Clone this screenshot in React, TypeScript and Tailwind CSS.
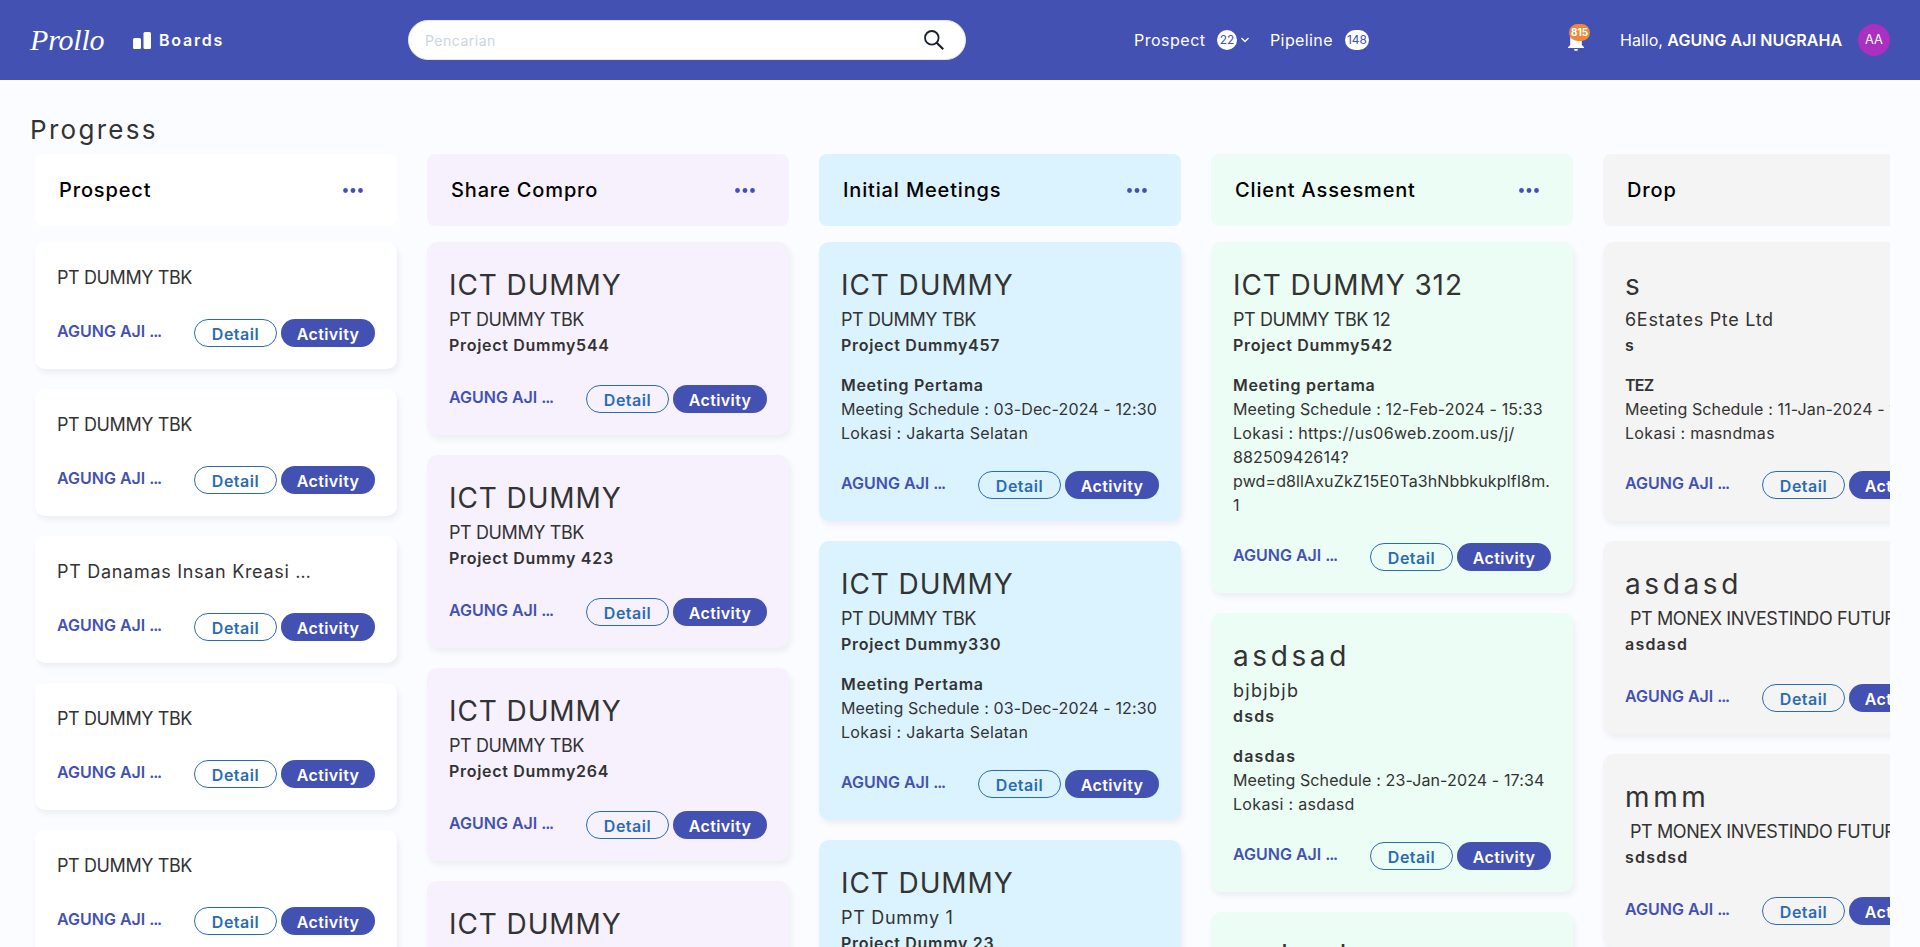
import React from "react";

type Meeting = { title: string; schedule: string; location: string[] };
type Card = { title?: string; company: string; project?: string; meeting?: Meeting; indent?: boolean };
type Column = { name: string; tone: string; cards: Card[] };

const columns: Column[] = [
  {
    name: "Prospect",
    tone: "bg-white",
    cards: [
      { company: "PT DUMMY TBK" },
      { company: "PT DUMMY TBK" },
      { company: "PT Danamas Insan Kreasi …" },
      { company: "PT DUMMY TBK" },
      { company: "PT DUMMY TBK" },
    ],
  },
  {
    name: "Share Compro",
    tone: "bg-[#f7f1fe]",
    cards: [
      { title: "ICT DUMMY", company: "PT DUMMY TBK", project: "Project Dummy544" },
      { title: "ICT DUMMY", company: "PT DUMMY TBK", project: "Project Dummy 423" },
      { title: "ICT DUMMY", company: "PT DUMMY TBK", project: "Project Dummy264" },
      { title: "ICT DUMMY", company: "PT DUMMY TBK" },
    ],
  },
  {
    name: "Initial Meetings",
    tone: "bg-[#dbf3ff]",
    cards: [
      {
        title: "ICT DUMMY",
        company: "PT DUMMY TBK",
        project: "Project Dummy457",
        meeting: { title: "Meeting Pertama", schedule: "03-Dec-2024 - 12:30", location: ["Jakarta Selatan"] },
      },
      {
        title: "ICT DUMMY",
        company: "PT DUMMY TBK",
        project: "Project Dummy330",
        meeting: { title: "Meeting Pertama", schedule: "03-Dec-2024 - 12:30", location: ["Jakarta Selatan"] },
      },
      { title: "ICT DUMMY", company: "PT Dummy 1", project: "Project Dummy 23" },
    ],
  },
  {
    name: "Client Assesment",
    tone: "bg-[#ebfdf5]",
    cards: [
      {
        title: "ICT DUMMY 312",
        company: "PT DUMMY TBK 12",
        project: "Project Dummy542",
        meeting: {
          title: "Meeting pertama",
          schedule: "12-Feb-2024 - 15:33",
          location: ["https://us06web.zoom.us/j/", "88250942614?", "pwd=d8llAxuZkZ15E0Ta3hNbbkukplfI8m.", "1"],
        },
      },
      {
        title: "asdsad",
        company: "bjbjbjb",
        project: "dsds",
        meeting: { title: "dasdas", schedule: "23-Jan-2024 - 17:34", location: ["asdasd"] },
      },
      { title: "asdsad", company: "bjbjbjb" },
    ],
  },
  {
    name: "Drop",
    tone: "bg-[#f4f4f4]",
    cards: [
      {
        title: "s",
        company: "6Estates Pte Ltd",
        project: "s",
        meeting: { title: "TEZ", schedule: "11-Jan-2024 - 10:00", location: ["masndmas"] },
      },
      { title: "asdasd", company: "PT MONEX INVESTINDO FUTURES", project: "asdasd", indent: true },
      { title: "mmm", company: "PT MONEX INVESTINDO FUTURES", project: "sdsdsd", indent: true },
    ],
  },
];

// Capitals are set tighter than lower-case text at every size.
const hasLower = (text: string) => /[a-z]/.test(text);
const allLower = (text: string) => /^[a-z]+$/.test(text);

const titleTracking = (text: string) => (hasLower(text) ? "tracking-[3.6px]" : "tracking-[0.9px]");
const companyTracking = (text: string) =>
  allLower(text) ? "tracking-[1.3px]" : hasLower(text) ? "tracking-[0.7px]" : "tracking-[-0.4px]";
const strongTracking = (text: string) =>
  allLower(text) ? "tracking-[1.2px]" : hasLower(text) ? "tracking-[0.7px]" : "tracking-[-0.8px]";

function BoardCard({ card, tone }: { card: Card; tone: string }) {
  const { title, company, project, meeting, indent } = card;
  return (
    <article className={`shrink-0 rounded-[10px] p-[22px] text-[#333] shadow-[2px_4px_6px_rgba(0,0,0,0.06)] ${tone}`}>
      {title && (
        <h3 className={`h-[42px] text-[28px] leading-[43px] whitespace-nowrap ${titleTracking(title)}`}>{title}</h3>
      )}
      <p className={`h-[27px] text-[18px] leading-[28px] whitespace-nowrap ${companyTracking(company)} ${indent ? "pl-[5px]" : ""}`}>
        {company}
      </p>
      {project && (
        <p className={`h-6 text-[16px] leading-6 font-semibold whitespace-nowrap ${strongTracking(project)}`}>{project}</p>
      )}
      {meeting && (
        <div className="mt-4 -mb-0.5 text-[16px] leading-6 tracking-[0.12px] whitespace-nowrap">
          <p className={`font-semibold ${strongTracking(meeting.title)}`}>{meeting.title}</p>
          <p>Meeting Schedule : {meeting.schedule}</p>
          <p className="tracking-[0.32px]">Lokasi : {meeting.location[0]}</p>
          {meeting.location.slice(1).map((line) => (
            <p key={line}>{line}</p>
          ))}
        </div>
      )}
      <div className="mt-7 flex h-7 items-center justify-between">
        <span className="-mt-1 text-[16px] font-semibold text-[#4351b2] whitespace-nowrap">
          AGUNG AJI <span className="tracking-[-1.2px]">...</span>
        </span>
        <div className="flex gap-1">
          <button className="h-7 w-[83px] rounded-full border border-[#2b6cb0] pt-px text-[16px] leading-none font-semibold tracking-[0.5px] text-[#2b6cb0]">Detail</button>
          <button className="h-7 w-[94px] rounded-full bg-[#4351b2] pt-px text-[16px] leading-none font-semibold tracking-[0.4px] text-white">Activity</button>
        </div>
      </div>
    </article>
  );
}

function Header() {
  return (
    <header className="flex h-20 shrink-0 items-center bg-[#4351b2] pl-[30px] text-white">
      <div className="w-[103px] font-['Liberation_Serif',serif] text-[30px] leading-none tracking-[-0.2px] italic">Prollo</div>
      <svg className="h-[17px] w-[18px]" viewBox="0 0 18 17" fill="currentColor">
        <rect x="0" y="6" width="8" height="11" rx="1.5" />
        <rect x="10.5" y="0" width="7.5" height="17" rx="1.5" />
      </svg>
      <span className="w-[257px] pl-2 text-[16px] font-semibold tracking-[1.8px]">Boards</span>
      <div className="flex h-10 w-[558px] items-center justify-between rounded-full border border-[#e2e8f0] bg-white pr-[21px] pl-4">
        <span className="text-[14px] tracking-[0.5px] text-[#cbd5e0]">Pencarian</span>
        <svg className="size-5" viewBox="0 0 20 20" fill="none" stroke="#1a202c" strokeWidth="1.8">
          <circle cx="7.8" cy="7.8" r="6.8" />
          <path d="M12.5 12.5 L19.2 19.2" strokeWidth="2.2" />
        </svg>
      </div>
      <nav className="ml-[168px] flex items-center text-[16px]">
        <span className="w-[83px] tracking-[0.5px]">Prospect</span>
        <span className="flex h-5 w-5 items-center justify-center rounded-full bg-white text-[12px] text-[#4351b2]">22</span>
        <svg className="ml-1 h-2 w-2" viewBox="0 0 8 8" fill="none" stroke="currentColor" strokeWidth="1.3">
          <path d="M0.5 2 L4 5.5 L7.5 2" />
        </svg>
        <span className="ml-[21px] w-[75px] tracking-[0.4px]">Pipeline</span>
        <span className="flex h-5 w-6 items-center justify-center rounded-full bg-white text-[12px] text-[#4351b2]">148</span>
      </nav>
      <div className="relative ml-[198px] h-[32px] w-[23px]">
        <svg className="absolute top-[9px] left-0 h-[18px] w-[18px]" viewBox="0 0 18 18" fill="currentColor">
          <path d="M9 0 C5.6 0 3.2 2.2 3.2 6 V12 L1 14.2 V15 H17 V14.2 L14.8 12 V6 C14.8 2.2 12.4 0 9 0 Z M7 16 H11 C11 17.2 10.2 18 9 18 S7 17.2 7 16 Z" />
        </svg>
        <span className="absolute top-0 left-[2px] flex h-[17px] w-[21px] items-center justify-center rounded-full bg-[#ed8936] text-[10px] font-bold">815</span>
      </div>
      <p className="ml-[30px] w-[238px] text-[16px] whitespace-nowrap">
        Hallo, <b className="font-semibold tracking-[0.06px]">AGUNG AJI NUGRAHA</b>
      </p>
      <div className="flex size-8 items-center justify-center rounded-full bg-[#ab2fc0] text-[12.8px]">AA</div>
    </header>
  );
}

export default function App() {
  return (
    <div className="flex h-[947px] w-[1920px] flex-col overflow-hidden bg-[#fafcff] font-['Inter',sans-serif]">
      <Header />
      <main className="flex min-h-0 flex-1 flex-col px-[30px] pt-[29px]">
        <h1 className="h-[45px] shrink-0 text-[26px] leading-[42px] tracking-[2.3px] text-[#333]">Progress</h1>
        <div className="flex min-h-0 flex-1 gap-[30px] overflow-hidden pl-[5px]">
          {columns.map((col) => (
            <section key={col.name} className="flex w-[362px] shrink-0 flex-col">
              <div className={`flex h-[72px] shrink-0 items-center justify-between rounded-lg pr-[34px] pl-6 ${col.tone}`}>
                <h2 className="text-[20px] font-medium tracking-[0.85px] text-black whitespace-nowrap">{col.name}</h2>
                <svg className="h-[5px] w-5" viewBox="0 0 20 5" fill="#4351b2">
                  <circle cx="2.5" cy="2.5" r="2.4" />
                  <circle cx="10" cy="2.5" r="2.4" />
                  <circle cx="17.5" cy="2.5" r="2.4" />
                </svg>
              </div>
              <div className="mt-4 flex flex-col gap-5">
                {col.cards.map((card, i) => (
                  <BoardCard key={i} card={card} tone={col.tone} />
                ))}
              </div>
            </section>
          ))}
        </div>
      </main>
    </div>
  );
}
